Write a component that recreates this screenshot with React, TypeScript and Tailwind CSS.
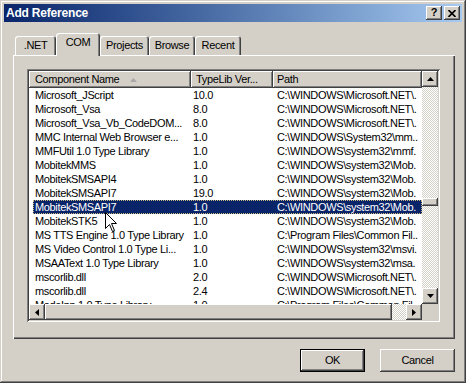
import React from "react";

type RowData = { name: string; ver: string; path: string; selected?: boolean };

const rows: RowData[] = [
  { name: "Microsoft_JScript", ver: "10.0", path: "C:\\WINDOWS\\Microsoft.NET\\." },
  { name: "Microsoft_Vsa", ver: "8.0", path: "C:\\WINDOWS\\Microsoft.NET\\." },
  { name: "Microsoft_Vsa_Vb_CodeDOM...", ver: "8.0", path: "C:\\WINDOWS\\Microsoft.NET\\." },
  { name: "MMC Internal Web Browser e...", ver: "1.0", path: "C:\\WINDOWS\\System32\\mm.." },
  { name: "MMFUtil 1.0 Type Library", ver: "1.0", path: "C:\\WINDOWS\\system32\\mmf." },
  { name: "MobitekMMS", ver: "1.0", path: "C:\\WINDOWS\\system32\\Mob." },
  { name: "MobitekSMSAPI4", ver: "1.0", path: "C:\\WINDOWS\\system32\\Mob." },
  { name: "MobitekSMSAPI7", ver: "19.0", path: "C:\\WINDOWS\\system32\\Mob." },
  { name: "MobitekSMSAPI7", ver: "1.0", path: "C:\\WINDOWS\\system32\\Mob.", selected: true },
  { name: "MobitekSTK5", ver: "1.0", path: "C:\\WINDOWS\\system32\\Mob." },
  { name: "MS TTS Engine 1.0 Type Library", ver: "1.0", path: "C:\\Program Files\\Common Fil.." },
  { name: "MS Video Control 1.0 Type Li...", ver: "1.0", path: "C:\\WINDOWS\\system32\\msvi." },
  { name: "MSAAText 1.0 Type Library", ver: "1.0", path: "C:\\WINDOWS\\system32\\msa." },
  { name: "mscorlib.dll", ver: "2.0", path: "C:\\WINDOWS\\Microsoft.NET\\." },
  { name: "mscorlib.dll", ver: "2.4", path: "C:\\WINDOWS\\Microsoft.NET\\." },
  { name: "ModeIpp 1.0 Type Library", ver: "1.0", path: "C:\\Program Files\\Common Fil.." },
];

const raised =
  "bg-[#d4d0c8] shadow-[inset_-1px_-1px_#404040,inset_1px_1px_#ffffff,inset_-2px_-2px_#808080,inset_2px_2px_#d4d0c8]";
const dither =
  "bg-[repeating-conic-gradient(#d4d0c8_0%_25%,#ffffff_0%_50%)] bg-[length:2px_2px]";

function Arrow({ dir }: { dir: "up" | "down" | "left" | "right" }) {
  if (dir === "up")
    return (
      <svg width="7" height="4" viewBox="0 0 7 4">
        <polygon points="3.5,0 7,4 0,4" fill="#000" />
      </svg>
    );
  if (dir === "down")
    return (
      <svg width="7" height="4" viewBox="0 0 7 4">
        <polygon points="0,0 7,0 3.5,4" fill="#000" />
      </svg>
    );
  if (dir === "left")
    return (
      <svg width="4" height="7" viewBox="0 0 4 7">
        <polygon points="4,0 4,7 0,3.5" fill="#000" />
      </svg>
    );
  return (
    <svg width="4" height="7" viewBox="0 0 4 7">
      <polygon points="0,0 4,3.5 0,7" fill="#000" />
    </svg>
  );
}

function ScrollBtn({ dir }: { dir: "up" | "down" | "left" | "right" }) {
  return (
    <div className={`${raised} w-[16px] h-[16px] shrink-0 flex items-center justify-center`}>
      <Arrow dir={dir} />
    </div>
  );
}

function Row({ r }: { r: RowData }) {
  return (
    <div className="flex h-[14px] leading-[14px] whitespace-nowrap shrink-0">
      <div className="w-[4px] shrink-0" />
      <div
        className={
          r.selected
            ? "flex flex-1 bg-[#0a246a] text-white outline-1 outline-dotted -outline-offset-1 outline-[#c8b880]"
            : "flex flex-1 text-black"
        }
      >
        <div className="w-[158px] shrink-0 pl-[2px] overflow-hidden">{r.name}</div>
        <div className="w-[82px] shrink-0 pl-[2px] overflow-hidden">{r.ver}</div>
        <div className="flex-1 pl-[4px] overflow-hidden">{r.path}</div>
      </div>
    </div>
  );
}

function Tab({ label, w, selected }: { label: string; w: string; selected?: boolean }) {
  return (
    <div
      className={
        selected
          ? `${w} h-[23px] -mb-px relative z-10 bg-[#d4d0c8] rounded-t-[3px] shadow-[inset_1px_1px_#ffffff,inset_-1px_0_#404040,inset_-2px_0_#808080] flex justify-center pt-[3px]`
          : `${w} h-[19px] bg-[#d4d0c8] rounded-t-[3px] shadow-[inset_1px_1px_#ffffff,inset_-1px_0_#404040,inset_-2px_0_#808080] flex justify-center pt-[3px]`
      }
    >
      <span className="leading-[13px]">{label}</span>
    </div>
  );
}

export default function App() {
  return (
    <div className="relative w-[469px] h-[387px] bg-white overflow-hidden font-['Liberation_Sans',Arial,sans-serif] text-[11px] tracking-[-0.35px] text-black">
      {/* window */}
      <div className="w-[466px] h-[383px] bg-[#d4d0c8] p-[4px] flex flex-col shadow-[inset_-1px_-1px_#404040,inset_1px_1px_#d4d0c8,inset_-2px_-2px_#808080,inset_2px_2px_#ffffff]">
        {/* title bar */}
        <div className="h-[18px] shrink-0 bg-linear-to-r from-[#0a246a] to-[#a6caf0] flex items-center pl-[2px] pr-[2px]">
          <span className="text-white font-bold text-[12px] tracking-[-0.2px] leading-[18px] flex-1">Add Reference</span>
          <div className={`${raised} w-[16px] h-[14px] flex items-center justify-center`}>
            <span className="font-bold text-[11px] leading-[11px] pb-px tracking-normal">?</span>
          </div>
          <div className={`${raised} w-[16px] h-[14px] ml-[2px] flex items-center justify-center`}>
            <svg width="8" height="7" viewBox="0 0 8 7">
              <path d="M0.5 0 L7.5 7 M7.5 0 L0.5 7" stroke="#000" strokeWidth="1.6" />
            </svg>
          </div>
        </div>

        {/* tabs */}
        <div className="mt-[11px] ml-[11px] h-[22px] flex items-end shrink-0">
          <Tab label=".NET" w="w-[41px]" />
          <Tab label="COM" w="w-[44px]" selected />
          <Tab label="Projects" w="w-[49px]" />
          <Tab label="Browse" w="w-[46px]" />
          <Tab label="Recent" w="w-[46px]" />
        </div>

        {/* tab panel */}
        <div className="ml-[9px] w-[442px] h-[284px] shrink-0 bg-[#d4d0c8] shadow-[inset_1px_1px_#ffffff,inset_-1px_-1px_#404040,inset_-2px_-2px_#808080] pt-[14px] pl-[14px]">
          {/* list view */}
          <div className="w-[413px] h-[253px] p-[2px] bg-white shadow-[inset_1px_1px_#808080,inset_-1px_-1px_#ffffff,inset_2px_2px_#404040,inset_-2px_-2px_#d4d0c8]">
            <div className="flex h-full">
              <div className="flex flex-col w-[393px]">
                {/* header */}
                <div className="flex h-[17px] shrink-0 leading-[17px] whitespace-nowrap">
                  <div className={`${raised} w-[162px] pl-[6px] flex items-center`}>
                    <span>Component Name</span>
                    <svg className="ml-[11px]" width="7" height="4" viewBox="0 0 7 4">
                      <polygon points="3.5,0 7,4 0,4" fill="#a8a8a8" />
                    </svg>
                  </div>
                  <div className={`${raised} w-[82px] pl-[5px] overflow-hidden`}>TypeLib Ver...</div>
                  <div className={`${raised} flex-1 pl-[4px]`}>Path</div>
                </div>
                {/* rows */}
                <div className="flex-1 overflow-hidden flex flex-col">
                  {rows.map((r, i) => (
                    <Row key={i} r={r} />
                  ))}
                </div>
                {/* horizontal scrollbar */}
                <div className="h-[16px] shrink-0 flex">
                  <ScrollBtn dir="left" />
                  <div className={`${raised} w-[347px]`} />
                  <div className={`${dither} flex-1`} />
                  <ScrollBtn dir="right" />
                </div>
              </div>
              {/* vertical scrollbar */}
              <div className="w-[16px] flex flex-col">
                <ScrollBtn dir="up" />
                <div className={`${dither} h-[111px] shrink-0`} />
                <div className={`${raised} h-[8px] shrink-0`} />
                <div className={`${dither} flex-1`} />
                <ScrollBtn dir="down" />
                <div className="h-[16px] shrink-0 bg-[#d4d0c8]" />
              </div>
            </div>
          </div>
        </div>

        {/* buttons */}
        <div className="mt-[10px] w-[451px] flex justify-end gap-[15px] shrink-0">
          <div className="w-[65px] h-[23px] border border-black">
            <div className={`${raised} w-full h-full flex items-center justify-center`}>OK</div>
          </div>
          <div className={`${raised} w-[75px] h-[23px] flex items-center justify-center`}>Cancel</div>
        </div>
      </div>

      {/* mouse cursor */}
      <svg className="absolute left-[105px] top-[212px]" width="13" height="21" viewBox="0 0 13 21">
        <path
          d="M0.5 0.5 L0.5 16.5 L4.5 12.5 L7.5 19.5 L9.5 18.5 L6.5 11.5 L11.5 11.5 Z"
          fill="#ffffff"
          stroke="#000000"
          strokeWidth="1"
          strokeLinejoin="miter"
        />
      </svg>
    </div>
  );
}
